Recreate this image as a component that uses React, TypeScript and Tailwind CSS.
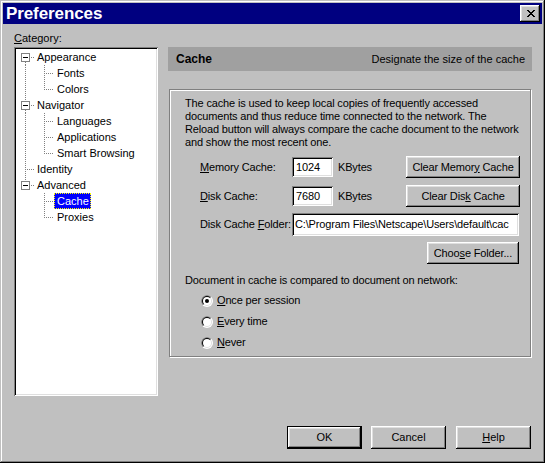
import React from "react";

const RAISED =
  "bg-[#c0c0c0] shadow-[inset_-1px_-1px_0_#000,inset_1px_1px_0_#fff,inset_-2px_-2px_0_#808080,inset_2px_2px_0_#dfdfdf]";
const SUNKEN =
  "bg-white shadow-[inset_1px_1px_0_#808080,inset_-1px_-1px_0_#fff,inset_2px_2px_0_#000,inset_-2px_-2px_0_#dfdfdf]";

function DotLine(p: { x1: number; y1: number; x2: number; y2: number }) {
  return (
    <line
      x1={p.x1}
      y1={p.y1}
      x2={p.x2}
      y2={p.y2}
      stroke="#808080"
      strokeWidth={1}
      strokeDasharray="1 1"
      shapeRendering="crispEdges"
    />
  );
}

type Row = {
  label: string;
  level: 0 | 1;
  box?: boolean;
  first?: boolean;
  lastTop?: boolean;
  last?: boolean;
  trunk?: boolean;
  selected?: boolean;
};

const rows: Row[] = [
  { label: "Appearance", level: 0, box: true, first: true },
  { label: "Fonts", level: 1, trunk: true },
  { label: "Colors", level: 1, trunk: true, last: true },
  { label: "Navigator", level: 0, box: true },
  { label: "Languages", level: 1, trunk: true },
  { label: "Applications", level: 1, trunk: true },
  { label: "Smart Browsing", level: 1, trunk: true, last: true },
  { label: "Identity", level: 0 },
  { label: "Advanced", level: 0, box: true, lastTop: true },
  { label: "Cache", level: 1, selected: true },
  { label: "Proxies", level: 1, last: true },
];

function TreeRow({ r }: { r: Row }) {
  const w = r.level === 0 ? 18 : 38;
  return (
    <div className="flex h-4 items-center">
      <svg width={w} height={16} viewBox={`0 0 ${w} 16`} className="shrink-0">
        {r.level === 0 && r.box && (
          <>
            {!r.first && <DotLine x1={9.5} y1={0} x2={9.5} y2={4} />}
            {!r.lastTop && <DotLine x1={9.5} y1={13} x2={9.5} y2={16} />}
            <DotLine x1={15} y1={8.5} x2={19} y2={8.5} />
            <rect x={5.5} y={4.5} width={8} height={8} fill="#fff" stroke="#808080" shapeRendering="crispEdges" />
            <rect x={7} y={8} width={5} height={1} fill="#000" />
          </>
        )}
        {r.level === 0 && !r.box && (
          <>
            <DotLine x1={9.5} y1={0} x2={9.5} y2={16} />
            <DotLine x1={11} y1={8.5} x2={19} y2={8.5} />
          </>
        )}
        {r.level === 1 && (
          <>
            {r.trunk && <DotLine x1={9.5} y1={0} x2={9.5} y2={16} />}
            <DotLine x1={28.5} y1={0} x2={28.5} y2={r.last ? 9 : 16} />
            <DotLine x1={30} y1={8.5} x2={38} y2={8.5} />
          </>
        )}
      </svg>
      <span
        className={
          "h-4 leading-[16px] pl-[3px] pr-[2px] whitespace-nowrap " +
          (r.selected
            ? "bg-[#0000ff] text-white outline-1 outline-dotted outline-[#ffff00] -outline-offset-1"
            : "")
        }
      >
        {r.label}
      </span>
    </div>
  );
}

function Radio({ checked, id }: { checked?: boolean; id: string }) {
  return (
    <svg width={12} height={12} viewBox="0 0 12 12" className="shrink-0">
      <defs>
        <clipPath id={`tl-${id}`}>
          <polygon points="0,0 12,0 0,12" />
        </clipPath>
      </defs>
      <circle cx={6} cy={6} r={6} fill="#fff" />
      <circle cx={6} cy={6} r={6} fill="#808080" clipPath={`url(#tl-${id})`} />
      <circle cx={6} cy={6} r={5} fill="#dfdfdf" />
      <circle cx={6} cy={6} r={5} fill="#000" clipPath={`url(#tl-${id})`} />
      <circle cx={6} cy={6} r={4} fill="#fff" />
      {checked && <circle cx={6} cy={6} r={2} fill="#000" />}
    </svg>
  );
}

const X_PATTERN = ["XX....XX", ".XX..XX.", "..XXXX..", "...XX...", "..XXXX..", ".XX..XX.", "XX....XX"];

function CloseGlyph() {
  const rects: React.ReactNode[] = [];
  X_PATTERN.forEach((row, y) =>
    row.split("").forEach((c, x) => {
      if (c === "X") rects.push(<rect key={`${x}-${y}`} x={x} y={y} width={1} height={1} fill="#000" />);
    })
  );
  return (
    <svg width={8} height={7} viewBox="0 0 8 7" shapeRendering="crispEdges">
      {rects}
    </svg>
  );
}

export default function App() {
  return (
    <div className="w-[545px] h-[463px] bg-[#c0c0c0] p-[3px] shadow-[inset_-1px_-1px_0_#000,inset_1px_1px_0_#c0c0c0,inset_-2px_-2px_0_#808080,inset_2px_2px_0_#fff] flex flex-col text-[11px] text-black font-['Liberation_Sans',Arial,sans-serif] overflow-hidden select-none">
      {/* Title bar */}
      <div className="h-[21px] shrink-0 bg-[#000080] flex items-center pl-[3px] pr-[2px]">
        <span className="text-white font-bold text-[17px] leading-[21px] tracking-[-0.1px]">Preferences</span>
        <div className={`ml-auto w-[20px] h-[17px] flex items-center justify-center pl-px ${RAISED}`}>
          <CloseGlyph />
        </div>
      </div>

      {/* Body */}
      <div className="flex pl-[11px] pr-[10px]">
        {/* Left column */}
        <div className="w-[144px] flex flex-col shrink-0">
          <div className="mt-[7px] h-[14px] leading-[14px]">
            <u>C</u>ategory:
          </div>
          <div className={`mt-[2px] h-[349px] p-[2px] ${SUNKEN}`}>
            {rows.map((r) => (
              <TreeRow key={r.label} r={r} />
            ))}
          </div>
        </div>

        {/* Right column */}
        <div className="ml-[10px] w-[364px] flex flex-col">
          <div className="mt-[23px] h-[24px] bg-[#a0a0a0] flex items-center pl-[8px] pr-[7px]">
            <span className="font-bold text-[12px]">Cache</span>
            <span className="ml-auto">Designate the size of the cache</span>
          </div>

          <div className="mt-[18px] ml-px w-[362px] h-[268px] border border-[#808080] shadow-[inset_1px_1px_0_#fff,1px_1px_0_#fff] pt-[7px] pl-[15px] pr-[10px] flex flex-col tracking-[-0.15px]">
            <p className="leading-[13px] whitespace-nowrap">
              The cache is used to keep local copies of frequently accessed
              <br />
              documents and thus reduce time connected to the network. The
              <br />
              Reload button will always compare the cache document to the network
              <br />
              and show the most recent one.
            </p>

            <div className="mt-[7px] h-[22px] flex items-center">
              <span className="w-[107px] pl-[15px] whitespace-nowrap">
                <u>M</u>emory Cache:
              </span>
              <div className={`w-[41px] h-[20px] pl-[4px] leading-[20px] ${SUNKEN}`}>1024</div>
              <span className="ml-[5px]">KBytes</span>
              <div className={`ml-auto w-[114px] h-[22px] flex items-center justify-center ${RAISED}`}>
                <span className="whitespace-nowrap">
                  Clear Memor<u>y</u> Cache
                </span>
              </div>
            </div>

            <div className="mt-[7px] h-[22px] flex items-center">
              <span className="w-[107px] pl-[15px] whitespace-nowrap">
                <u>D</u>isk Cache:
              </span>
              <div className={`w-[41px] h-[20px] pl-[4px] leading-[20px] ${SUNKEN}`}>7680</div>
              <span className="ml-[5px]">KBytes</span>
              <div className={`ml-auto w-[114px] h-[22px] flex items-center justify-center ${RAISED}`}>
                <span className="whitespace-nowrap">
                  Clear Dis<u>k</u> Cache
                </span>
              </div>
            </div>

            <div className="mt-[6px] h-[23px] flex items-center">
              <span className="w-[107px] pl-[15px] whitespace-nowrap">
                Disk Cache <u>F</u>older:
              </span>
              <div className={`w-[227px] h-[23px] pl-[3px] leading-[23px] overflow-hidden whitespace-nowrap ${SUNKEN}`}>
                C:\Program Files\Netscape\Users\default\cac
              </div>
            </div>

            <div className="mt-[6px] h-[22px] flex">
              <div className={`ml-auto mr-px w-[92px] h-[22px] flex items-center justify-center ${RAISED}`}>
                <span className="whitespace-nowrap">
                  Choo<u>s</u>e Folder...
                </span>
              </div>
            </div>

            <div className="mt-[10px] leading-[13px] whitespace-nowrap">
              Document in cache is compared to document on network:
            </div>

            <div className="mt-[3px] flex flex-col pl-[16px]">
              <div className="h-[21px] flex items-center gap-[4px]">
                <Radio id="a" checked />
                <span>
                  <u>O</u>nce per session
                </span>
              </div>
              <div className="h-[21px] flex items-center gap-[4px]">
                <Radio id="b" />
                <span>
                  <u>E</u>very time
                </span>
              </div>
              <div className="h-[21px] flex items-center gap-[4px]">
                <Radio id="c" />
                <span>
                  <u>N</u>ever
                </span>
              </div>
            </div>
          </div>
        </div>
      </div>

      {/* Bottom buttons */}
      <div className="mt-[30px] flex justify-end pr-[11px]">
        <div className="w-[75px] h-[23px] border border-black">
          <div className={`w-full h-full flex items-center justify-center ${RAISED}`}>OK</div>
        </div>
        <div className={`ml-[9px] w-[75px] h-[23px] flex items-center justify-center ${RAISED}`}>Cancel</div>
        <div className={`ml-[10px] w-[75px] h-[23px] flex items-center justify-center ${RAISED}`}>
          <span>
            <u>H</u>elp
          </span>
        </div>
      </div>
    </div>
  );
}
